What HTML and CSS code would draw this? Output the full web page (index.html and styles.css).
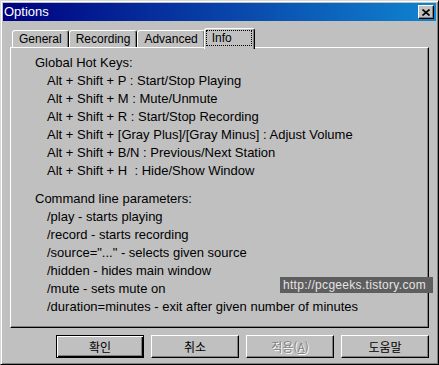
FILE: index.html
```html
<!DOCTYPE html>
<html lang="ko">

<head>
    <meta charset="UTF-8">
    <meta name="viewport" content="width=device-width, initial-scale=1.0">
    <title>Options</title>
    <link rel="stylesheet" href="styles.css">
</head>

<body>
    <div class="window">
        <div class="titlebar">
            <span class="title">Options</span>
            <button class="close">
                <svg width="8" height="7" viewBox="0 0 8 7">
                    <path d="M0.5 0.5 L7.5 6.5 M7.5 0.5 L0.5 6.5" stroke="#000" stroke-width="1.6" fill="none"/>
                </svg>
            </button>
        </div>
        <div class="body">
            <div class="tabs">
                <div class="tab">General</div>
                <div class="tab">Recording</div>
                <div class="tab">Advanced</div>
                <div class="tab active"><span class="focus">Info</span></div>
            </div>
            <div class="panel">
                <p class="heading">Global Hot Keys:</p>
                <ul class="lines">
                    <li>Alt + Shift + P : Start/Stop Playing</li>
                    <li>Alt + Shift + M : Mute/Unmute</li>
                    <li>Alt + Shift + R : Start/Stop Recording</li>
                    <li>Alt + Shift + [Gray Plus]/[Gray Minus] : Adjust Volume</li>
                    <li>Alt + Shift + B/N : Previous/Next Station</li>
                    <li>Alt + Shift + H &nbsp;: Hide/Show Window</li>
                </ul>
                <p class="heading second">Command line parameters:</p>
                <ul class="lines">
                    <li>/play - starts playing</li>
                    <li>/record - starts recording</li>
                    <li>/source="..." - selects given source</li>
                    <li>/hidden - hides main window</li>
                    <li>/mute - sets mute on</li>
                    <li>/duration=minutes - exit after given number of minutes</li>
                </ul>
            </div>
            <div class="buttons">
                <button class="btn default">확인</button>
                <button class="btn">취소</button>
                <button class="btn disabled">적용(<u>A</u>)</button>
                <button class="btn">도움말</button>
            </div>
        </div>
        <div class="watermark">http://pcgeeks.tistory.com</div>
    </div>
</body>

</html>
```

FILE: styles.css
```css
* {
    box-sizing: border-box;
}

body {
    margin: 0;
    background-color: #c0c0c0;
    font-family: "Liberation Sans", Arial, "Noto Sans CJK KR", sans-serif;
    font-size: 12px;
    color: #000;
}

.window {
    position: relative;
    width: 439px;
    height: 365px;
    padding: 3px;
    background-color: #c0c0c0;
    border-top: 1px solid #d8d8d8;
    border-left: 1px solid #d8d8d8;
    border-right: 1px solid #000;
    border-bottom: 1px solid #000;
    box-shadow: inset 1px 1px #fff, inset -1px -1px #808080;
}

.titlebar {
    display: flex;
    align-items: center;
    justify-content: space-between;
    height: 18px;
    padding: 0 2px 0 1px;
    margin: -1px -1px 0 -1px;
    background: linear-gradient(to right, #000080, #1084d0);
}

.title {
    color: #fff;
    font-size: 13px;
    line-height: 18px;
}

.close {
    display: flex;
    align-items: center;
    justify-content: center;
    width: 16px;
    height: 14px;
    padding: 0;
    background-color: #c0c0c0;
    border-top: 1px solid #fff;
    border-left: 1px solid #fff;
    border-right: 1px solid #000;
    border-bottom: 1px solid #000;
    box-shadow: inset -1px -1px #808080;
}

.body {
    padding: 7px 6px 0 6px;
}

.tabs {
    display: flex;
    align-items: flex-end;
    height: 19px;
    padding-left: 2px;
}

.tab {
    height: 17px;
    padding: 0 6px;
    line-height: 16px;
    border-top: 1px solid #fff;
    border-left: 1px solid #fff;
    border-right: 1px solid #000;
    border-radius: 3px 3px 0 0;
    box-shadow: inset -1px 0 #808080;
}

.tab.active {
    position: relative;
    z-index: 1;
    width: 51px;
    height: 21px;
    margin: 0 -2px -2px -1px;
    padding: 1px 2px 0 1px;
    background-color: #c0c0c0;
}

.focus {
    display: block;
    height: 16px;
    padding-left: 5px;
    line-height: 14px;
    border: 1px dotted #000;
}

.panel {
    height: 281px;
    padding: 6px 0 0 24px;
    font-size: 13px;
    border-top: 1px solid #fff;
    border-left: 1px solid #fff;
    border-right: 1px solid #000;
    border-bottom: 1px solid #000;
    box-shadow: inset -1px -1px #808080;
}

.heading {
    margin: 0;
    line-height: 18px;
}

.heading.second {
    margin-top: 10px;
}

.lines {
    margin: 0;
    padding: 0 0 0 12px;
    list-style: none;
    line-height: 18px;
}

.buttons {
    display: flex;
    justify-content: flex-end;
    gap: 7px;
    margin-top: 7px;
}

.btn {
    width: 88px;
    height: 23px;
    padding: 0;
    font-family: "Noto Sans CJK KR", sans-serif;
    font-size: 12px;
    color: #000;
    background-color: #c0c0c0;
    border-top: 1px solid #fff;
    border-left: 1px solid #fff;
    border-right: 1px solid #000;
    border-bottom: 1px solid #000;
    box-shadow: inset -1px -1px #808080;
}

.btn.default {
    border: 1px solid #000;
    box-shadow: inset 1px 1px #fff, inset -1px -1px #000, inset -2px -2px #808080;
}

.btn.disabled {
    color: #808080;
    text-shadow: 1px 1px #fff;
}

.watermark {
    position: absolute;
    left: 279px;
    top: 276px;
    width: 153px;
    height: 16px;
    padding-left: 3px;
    line-height: 16px;
    font-size: 12px;
    color: #e4e4e4;
    background-color: #5e5e5e;
    letter-spacing: 0.3px;
}
```
